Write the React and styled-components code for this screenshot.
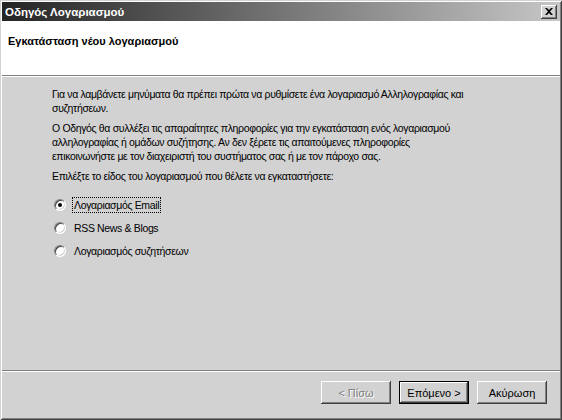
import React from 'react'
import styled, { createGlobalStyle } from 'styled-components'

const GlobalStyle = createGlobalStyle`
    html, body {
        margin: 0;
        padding: 0;
        background: #d2d2d2;
    }
    * {
        box-sizing: border-box;
    }
`;

const Window = styled.div`
    display: flex;
    flex-direction: column;
    width: 562px;
    height: 420px;
    padding: 2px;
    background: #d2d2d2;
    box-shadow: inset 1px 1px #d2d2d2, inset -1px -1px #404040,
        inset 2px 2px #ffffff, inset -2px -2px #808080;
    font-family: "Liberation Sans", Arial, sans-serif;
    font-size: 11px;
    color: #000;
`;

const TitleBar = styled.div`
    display: flex;
    align-items: center;
    justify-content: space-between;
    height: 19px;
    padding: 0 3px 0 3px;
    background: linear-gradient(to right, #242424, #c6c6c6);
    color: #fff;
    font-weight: bold;
    font-size: 11.5px;
`;

const CloseButton = styled.div`
    display: flex;
    align-items: center;
    justify-content: center;
    width: 16px;
    height: 14px;
    background: #d2d2d2;
    box-shadow: inset -1px -1px #404040, inset 1px 1px #ffffff,
        inset -2px -2px #808080;
`;

const Header = styled.div`
    height: 55px;
    padding: 14px 8px 0 6px;
    background: #fff;
    border-bottom: 1px solid #808080;
    box-shadow: 0 1px #ffffff;
    font-weight: bold;
    font-size: 11px;
`;

const Body = styled.div`
    flex: 1;
    padding: 11px 20px 0 50px;
    font-size: 10.5px;
    letter-spacing: -0.35px;
`;

const Para = styled.p`
    margin: 0 0 6px 0;
    line-height: 14px;
    white-space: nowrap;
`;

const RadioGroup = styled.div`
    display: flex;
    flex-direction: column;
    margin-top: 10px;
    padding-left: 2px;
`;

const RadioRow = styled.label`
    display: flex;
    align-items: center;
    height: 23px;
`;

const RadioCircle = styled.span`
    position: relative;
    width: 12px;
    height: 12px;
    margin-right: 6px;
    border-radius: 50%;
    background: #fff;
    border: 1px solid;
    border-color: #808080 #ffffff #ffffff #808080;
    box-shadow: inset 1px 1px #404040, inset -1px -1px #d2d2d2;

    &::after {
        content: '';
        display: ${p => (p.checked ? 'block' : 'none')};
        position: absolute;
        left: 3px;
        top: 3px;
        width: 4px;
        height: 4px;
        border-radius: 50%;
        background: #000;
    }
`;

const RadioLabel = styled.span`
    padding: 1px 1px;
    border: 1px dotted ${p => (p.focused ? '#000' : 'transparent')};
`;

const Footer = styled.div`
    display: flex;
    justify-content: flex-end;
    gap: 8px;
    height: 48px;
    padding: 10px 13px 0 0;
    border-top: 1px solid #808080;
    box-shadow: inset 0 1px #ffffff;
`;

const Button = styled.button`
    width: 70px;
    height: 23px;
    padding: 0;
    background: #d2d2d2;
    font-family: inherit;
    font-size: 11px;
    color: ${p => (p.disabled ? '#808080' : '#000')};
    text-shadow: ${p => (p.disabled ? '1px 1px #ffffff' : 'none')};
    border: ${p => (p.primary ? '1px solid #000' : 'none')};
    box-shadow: ${p => p.primary
        ? 'inset -1px -1px #404040, inset 1px 1px #ffffff, inset -2px -2px #808080'
        : 'inset -1px -1px #404040, inset 1px 1px #ffffff, inset -2px -2px #808080, inset 2px 2px #d2d2d2'};
`;

function RadioOption({ label, checked, focused }) {
    return (
        <RadioRow>
            <RadioCircle checked={checked} />
            <RadioLabel focused={focused}>{label}</RadioLabel>
        </RadioRow>
    )
}

function App() {
    return (
        <>
            <GlobalStyle />
            <Window>
                <TitleBar>
                    <span>Οδηγός Λογαριασμού</span>
                    <CloseButton>
                        <svg width="8" height="7" viewBox="0 0 8 7">
                            <path d="M0 0h2l2 2 2-2h2L5 3.5 8 7H6L4 5 2 7H0l3-3.5z" fill="#000" />
                        </svg>
                    </CloseButton>
                </TitleBar>
                <Header>Εγκατάσταση νέου λογαριασμού</Header>
                <Body>
                    <Para>
                        Για να λαμβάνετε μηνύματα θα πρέπει πρώτα να ρυθμίσετε ένα λογαριασμό Αλληλογραφίας και<br />
                        συζητήσεων.
                    </Para>
                    <Para>
                        Ο Οδηγός θα συλλέξει τις απαραίτητες πληροφορίες για την εγκατάσταση ενός λογαριασμού<br />
                        αλληλογραφίας ή ομάδων συζήτησης. Αν δεν ξέρετε τις απαιτούμενες πληροφορίες<br />
                        επικοινωνήστε με τον διαχειριστή του συστήματος σας ή με τον πάροχο σας.
                    </Para>
                    <Para>Επιλέξτε το είδος του λογαριασμού που θέλετε να εγκαταστήσετε:</Para>
                    <RadioGroup>
                        <RadioOption label="Λογαριασμός Email" checked focused />
                        <RadioOption label="RSS News & Blogs" />
                        <RadioOption label="Λογαριασμός συζητήσεων" />
                    </RadioGroup>
                </Body>
                <Footer>
                    <Button disabled>&lt; Πίσω</Button>
                    <Button primary>Επόμενο &gt;</Button>
                    <Button>Ακύρωση</Button>
                </Footer>
            </Window>
        </>
    )
}

export default App;
